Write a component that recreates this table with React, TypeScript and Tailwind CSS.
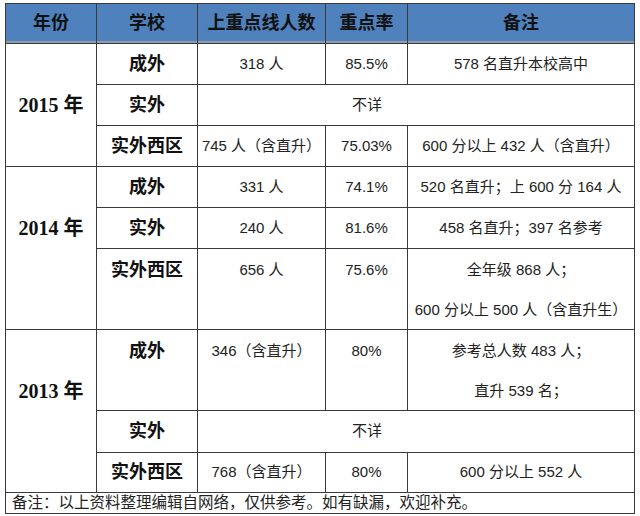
import React from "react";

const cjk = "font-['Liberation_Sans','Noto_Sans_CJK_SC',sans-serif]";
const serif = "font-['Liberation_Serif','Noto_Sans_CJK_SC',serif]";

const Head = ({ children }: { children: React.ReactNode }) => (
  <div className="flex items-center justify-center bg-[#4f81bd] text-[18px] font-bold text-[#111] shadow-[inset_0_-2px_0_#8c9aab]">
    {children}
  </div>
);

const Cell = ({ lines, bold, className = "" }: { lines: string[]; bold?: boolean; className?: string }) => (
  <div className={`flex flex-col bg-white ${className}`}>
    {lines.map((l, i) => (
      <div
        key={i}
        className={`flex h-[40px] shrink-0 items-center justify-center whitespace-nowrap ${
          bold ? "text-[18px] font-bold text-[#111]" : "text-[15px] text-[#222]"
        }`}
      >
        {l}
      </div>
    ))}
  </div>
);

const Year = ({ text, className = "" }: { text: string; className?: string }) => (
  <div className={`row-span-3 flex items-center justify-center bg-white text-[20px] font-bold text-[#111] ${serif} ${className}`}>
    {text}
  </div>
);

export default function App() {
  return (
    <div className={`h-[516px] w-[640px] bg-white pt-[3px] pl-[5px] ${cjk}`}>
      <div className="grid w-[630px] grid-cols-[90px_100px_127px_81px_226px] grid-rows-[39px_40px_40px_40px_40px_40px_80px_80px_41px_39px_20px] gap-px bg-[#3a3a3a] p-px">
        <Head>年份</Head>
        <Head>学校</Head>
        <Head>上重点线人数</Head>
        <Head>重点率</Head>
        <Head>备注</Head>

        <Year text="2015 年" />
        <Cell bold lines={["成外"]} />
        <Cell lines={["318 人"]} />
        <Cell lines={["85.5%"]} />
        <Cell lines={["578 名直升本校高中"]} />
        <Cell bold lines={["实外"]} />
        <div className="col-span-3 flex items-center bg-white pl-[154px] text-[15px] text-[#222]">不详</div>
        <Cell bold lines={["实外西区"]} />
        <Cell lines={["745 人（含直升）"]} />
        <Cell lines={["75.03%"]} />
        <Cell lines={["600 分以上 432 人（含直升）"]} />

        <Year text="2014 年" className="pb-[40px]" />
        <Cell bold lines={["成外"]} />
        <Cell lines={["331 人"]} />
        <Cell lines={["74.1%"]} />
        <Cell lines={["520 名直升；上 600 分 164 人"]} />
        <Cell bold lines={["实外"]} />
        <Cell lines={["240 人"]} />
        <Cell lines={["81.6%"]} />
        <Cell lines={["458 名直升；397 名参考"]} />
        <Cell bold lines={["实外西区"]} className="pt-px" />
        <Cell lines={["656 人"]} className="pt-px" />
        <Cell lines={["75.6%"]} className="pt-px" />
        <Cell lines={["全年级 868 人；", "600 分以上 500 人（含直升生）"]} className="pt-px" />

        <Year text="2013 年" className="pb-[40px]" />
        <Cell bold lines={["成外"]} className="pt-px" />
        <Cell lines={["346（含直升）"]} className="pt-px" />
        <Cell lines={["80%"]} className="pt-px" />
        <Cell lines={["参考总人数 483 人；", "直升 539 名；"]} className="pt-px" />
        <Cell bold lines={["实外"]} className="justify-center" />
        <div className="col-span-3 flex items-center bg-white pl-[154px] text-[15px] text-[#222]">不详</div>
        <Cell bold lines={["实外西区"]} className="justify-center" />
        <Cell lines={["768（含直升）"]} className="justify-center" />
        <Cell lines={["80%"]} className="justify-center" />
        <Cell lines={["600 分以上 552 人"]} className="justify-center" />

        <div className="col-span-5 flex items-center bg-white pl-[6px] text-[15.5px] leading-none text-[#222]">
          备注：以上资料整理编辑自网络，仅供参考。如有缺漏，欢迎补充。
        </div>
      </div>
    </div>
  );
}
